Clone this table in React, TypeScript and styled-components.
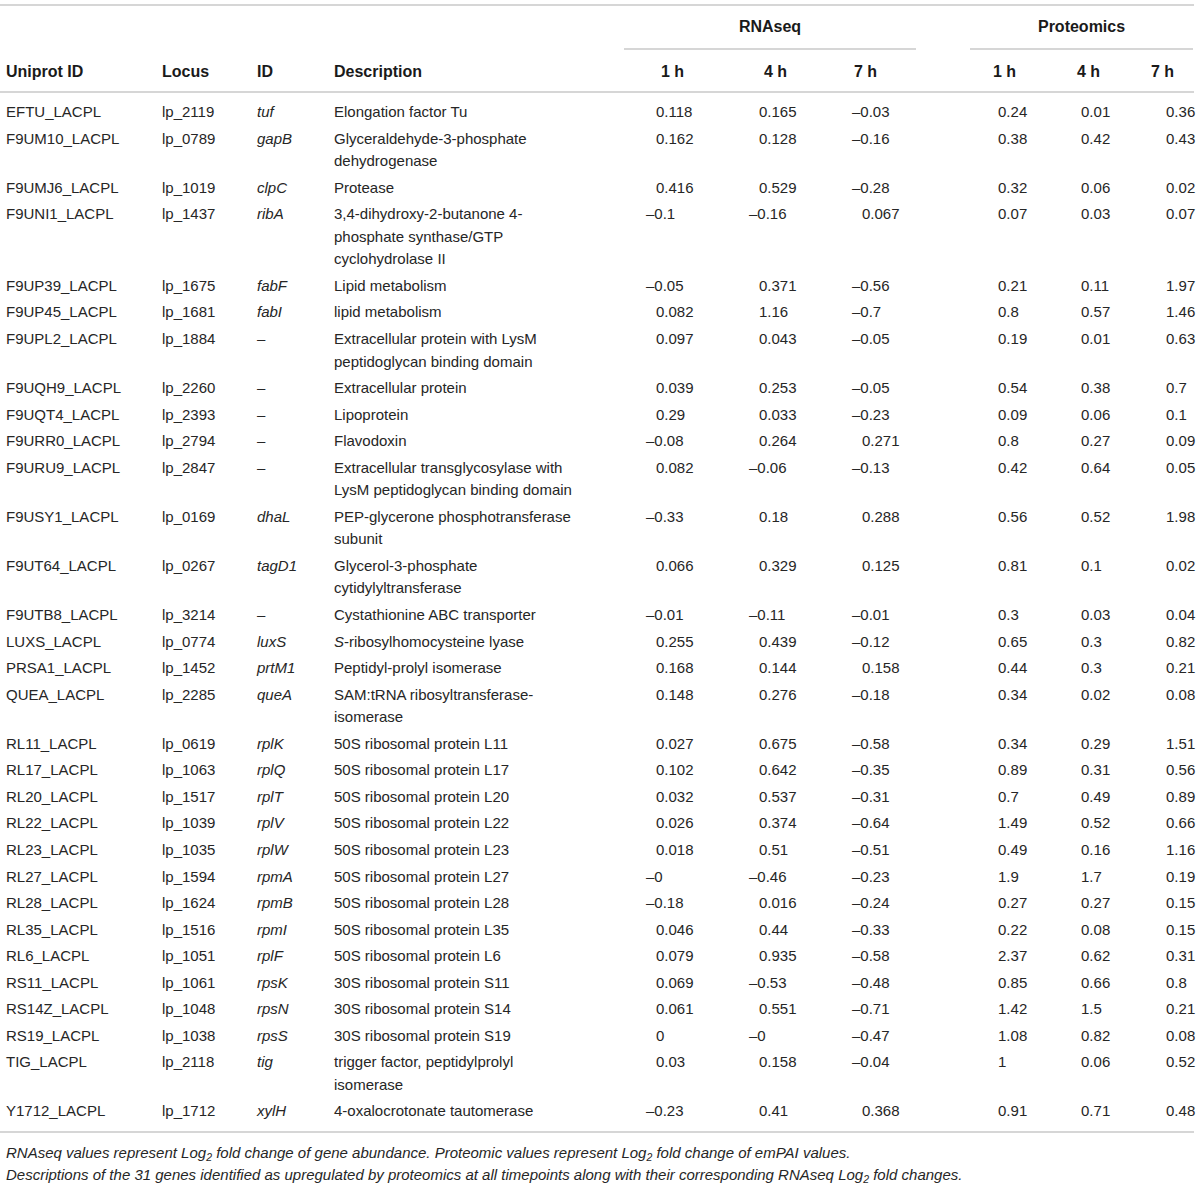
import React from "react";
import styled, { createGlobalStyle } from "styled-components";

const Global = createGlobalStyle`
  html, body { margin: 0; padding: 0; background: #ffffff; }
  body {
    font-family: "Liberation Sans", Arial, Helvetica, sans-serif;
    color: #262626;
  }
`;

const LINE = "#d6d6d6";

const Page = styled.div`
  width: 1194px;
  padding-top: 4px;
`;

const Table = styled.table`
  width: 1194px;
  table-layout: fixed;
  border-collapse: separate;
  border-spacing: 0;
  font-size: 15px;
  line-height: 22.55px;
  border-top: 2px solid ${LINE};
  border-bottom: 2px solid ${LINE};
`;

const HeadCell = styled.th`
  text-align: left;
  vertical-align: bottom;
  font-weight: bold;
  font-size: 16px;
  color: #1a1a1a;
  padding: 0 6px 8px 6px;
  border-bottom: 2px solid ${LINE};
`;

const GroupCell = styled.th`
  padding: 10px 0 0 0;
  font-weight: bold;
  font-size: 16px;
  color: #1a1a1a;
`;

const GroupLabel = styled.div<{ $left: number; $right: number }>`
  margin-left: ${(p) => p.$left}px;
  margin-right: ${(p) => p.$right}px;
  padding-bottom: 9px;
  border-bottom: 2px solid ${LINE};
  text-align: center;
`;

const SubHead = styled.th<{ $padRight?: number }>`
  text-align: center;
  font-weight: bold;
  font-size: 16px;
  color: #1a1a1a;
  padding: 11px ${(p) => p.$padRight ?? 0}px 8px 0;
  border-bottom: 2px solid ${LINE};
`;

const Row = styled.tr`
  &:first-child td { padding-top: 8px; }
  &:last-child td { padding-bottom: 8px; }
`;

const Cell = styled.td`
  vertical-align: top;
  padding: 2px 6px;
`;

const DescCell = styled.td`
  vertical-align: top;
  padding: 2px 42px 2px 6px;
`;

const NumCell = styled.td`
  vertical-align: top;
  padding: 2px 0 2px 35px;
  white-space: nowrap;
`;

const Num = styled.span<{ $neg: boolean }>`
  display: inline-block;
  margin-left: ${(p) => (p.$neg ? -10 : 0)}px;
`;

const Gene = styled.i`
  font-style: italic;
`;

const Notes = styled.div`
  padding: 9px 0 0 6px;
  font-size: 15px;
  line-height: 22px;
  font-style: italic;
  color: #262626;
`;

const NoteLine = styled.div``;

const Sub = styled.sub`
  font-size: 10.5px;
  line-height: 0;
  vertical-align: -3px;
`;

type Rec = {
  uid: string;
  locus: string;
  gene: string;
  desc: React.ReactNode;
  r: string[];
  p: string[];
};

const rows: Rec[] = [
  { uid: "EFTU_LACPL", locus: "lp_2119", gene: "tuf", desc: "Elongation factor Tu", r: ["0.118", "0.165", "–0.03"], p: ["0.24", "0.01", "0.36"] },
  { uid: "F9UM10_LACPL", locus: "lp_0789", gene: "gapB", desc: "Glyceraldehyde-3-phosphate dehydrogenase", r: ["0.162", "0.128", "–0.16"], p: ["0.38", "0.42", "0.43"] },
  { uid: "F9UMJ6_LACPL", locus: "lp_1019", gene: "clpC", desc: "Protease", r: ["0.416", "0.529", "–0.28"], p: ["0.32", "0.06", "0.02"] },
  { uid: "F9UNI1_LACPL", locus: "lp_1437", gene: "ribA", desc: "3,4-dihydroxy-2-butanone 4-phosphate synthase/GTP cyclohydrolase II", r: ["–0.1", "–0.16", "0.067"], p: ["0.07", "0.03", "0.07"] },
  { uid: "F9UP39_LACPL", locus: "lp_1675", gene: "fabF", desc: "Lipid metabolism", r: ["–0.05", "0.371", "–0.56"], p: ["0.21", "0.11", "1.97"] },
  { uid: "F9UP45_LACPL", locus: "lp_1681", gene: "fabI", desc: "lipid metabolism", r: ["0.082", "1.16", "–0.7"], p: ["0.8", "0.57", "1.46"] },
  { uid: "F9UPL2_LACPL", locus: "lp_1884", gene: "", desc: "Extracellular protein with LysM peptidoglycan binding domain", r: ["0.097", "0.043", "–0.05"], p: ["0.19", "0.01", "0.63"] },
  { uid: "F9UQH9_LACPL", locus: "lp_2260", gene: "", desc: "Extracellular protein", r: ["0.039", "0.253", "–0.05"], p: ["0.54", "0.38", "0.7"] },
  { uid: "F9UQT4_LACPL", locus: "lp_2393", gene: "", desc: "Lipoprotein", r: ["0.29", "0.033", "–0.23"], p: ["0.09", "0.06", "0.1"] },
  { uid: "F9URR0_LACPL", locus: "lp_2794", gene: "", desc: "Flavodoxin", r: ["–0.08", "0.264", "0.271"], p: ["0.8", "0.27", "0.09"] },
  { uid: "F9URU9_LACPL", locus: "lp_2847", gene: "", desc: "Extracellular transglycosylase with LysM peptidoglycan binding domain", r: ["0.082", "–0.06", "–0.13"], p: ["0.42", "0.64", "0.05"] },
  { uid: "F9USY1_LACPL", locus: "lp_0169", gene: "dhaL", desc: "PEP-glycerone phosphotransferase subunit", r: ["–0.33", "0.18", "0.288"], p: ["0.56", "0.52", "1.98"] },
  { uid: "F9UT64_LACPL", locus: "lp_0267", gene: "tagD1", desc: "Glycerol-3-phosphate cytidylyltransferase", r: ["0.066", "0.329", "0.125"], p: ["0.81", "0.1", "0.02"] },
  { uid: "F9UTB8_LACPL", locus: "lp_3214", gene: "", desc: "Cystathionine ABC transporter", r: ["–0.01", "–0.11", "–0.01"], p: ["0.3", "0.03", "0.04"] },
  { uid: "LUXS_LACPL", locus: "lp_0774", gene: "luxS", desc: (<><Gene>S</Gene>-ribosylhomocysteine lyase</>), r: ["0.255", "0.439", "–0.12"], p: ["0.65", "0.3", "0.82"] },
  { uid: "PRSA1_LACPL", locus: "lp_1452", gene: "prtM1", desc: "Peptidyl-prolyl isomerase", r: ["0.168", "0.144", "0.158"], p: ["0.44", "0.3", "0.21"] },
  { uid: "QUEA_LACPL", locus: "lp_2285", gene: "queA", desc: "SAM:tRNA ribosyltransferase-isomerase", r: ["0.148", "0.276", "–0.18"], p: ["0.34", "0.02", "0.08"] },
  { uid: "RL11_LACPL", locus: "lp_0619", gene: "rplK", desc: "50S ribosomal protein L11", r: ["0.027", "0.675", "–0.58"], p: ["0.34", "0.29", "1.51"] },
  { uid: "RL17_LACPL", locus: "lp_1063", gene: "rplQ", desc: "50S ribosomal protein L17", r: ["0.102", "0.642", "–0.35"], p: ["0.89", "0.31", "0.56"] },
  { uid: "RL20_LACPL", locus: "lp_1517", gene: "rplT", desc: "50S ribosomal protein L20", r: ["0.032", "0.537", "–0.31"], p: ["0.7", "0.49", "0.89"] },
  { uid: "RL22_LACPL", locus: "lp_1039", gene: "rplV", desc: "50S ribosomal protein L22", r: ["0.026", "0.374", "–0.64"], p: ["1.49", "0.52", "0.66"] },
  { uid: "RL23_LACPL", locus: "lp_1035", gene: "rplW", desc: "50S ribosomal protein L23", r: ["0.018", "0.51", "–0.51"], p: ["0.49", "0.16", "1.16"] },
  { uid: "RL27_LACPL", locus: "lp_1594", gene: "rpmA", desc: "50S ribosomal protein L27", r: ["–0", "–0.46", "–0.23"], p: ["1.9", "1.7", "0.19"] },
  { uid: "RL28_LACPL", locus: "lp_1624", gene: "rpmB", desc: "50S ribosomal protein L28", r: ["–0.18", "0.016", "–0.24"], p: ["0.27", "0.27", "0.15"] },
  { uid: "RL35_LACPL", locus: "lp_1516", gene: "rpmI", desc: "50S ribosomal protein L35", r: ["0.046", "0.44", "–0.33"], p: ["0.22", "0.08", "0.15"] },
  { uid: "RL6_LACPL", locus: "lp_1051", gene: "rplF", desc: "50S ribosomal protein L6", r: ["0.079", "0.935", "–0.58"], p: ["2.37", "0.62", "0.31"] },
  { uid: "RS11_LACPL", locus: "lp_1061", gene: "rpsK", desc: "30S ribosomal protein S11", r: ["0.069", "–0.53", "–0.48"], p: ["0.85", "0.66", "0.8"] },
  { uid: "RS14Z_LACPL", locus: "lp_1048", gene: "rpsN", desc: "30S ribosomal protein S14", r: ["0.061", "0.551", "–0.71"], p: ["1.42", "1.5", "0.21"] },
  { uid: "RS19_LACPL", locus: "lp_1038", gene: "rpsS", desc: "30S ribosomal protein S19", r: ["0", "–0", "–0.47"], p: ["1.08", "0.82", "0.08"] },
  { uid: "TIG_LACPL", locus: "lp_2118", gene: "tig", desc: "trigger factor, peptidylprolyl isomerase", r: ["0.03", "0.158", "–0.04"], p: ["1", "0.06", "0.52"] },
  { uid: "Y1712_LACPL", locus: "lp_1712", gene: "xylH", desc: "4-oxalocrotonate tautomerase", r: ["–0.23", "0.41", "0.368"], p: ["0.91", "0.71", "0.48"] },
];

const widths = [156, 95, 77, 293, 103, 103, 89, 47, 83, 85, 63];

function Value({ v }: { v: string }) {
  return <Num $neg={v.startsWith("–")}>{v}</Num>;
}

export default function App() {
  return (
    <Page>
      <Global />
      <Table>
        <colgroup>
          {widths.map((w, i) => (
            <col key={i} style={{ width: `${w}px` }} />
          ))}
        </colgroup>
        <thead>
          <tr>
            <HeadCell rowSpan={2}>Uniprot ID</HeadCell>
            <HeadCell rowSpan={2}>Locus</HeadCell>
            <HeadCell rowSpan={2}>ID</HeadCell>
            <HeadCell rowSpan={2}>Description</HeadCell>
            <GroupCell colSpan={3}>
              <GroupLabel $left={3} $right={0}>RNAseq</GroupLabel>
            </GroupCell>
            <HeadCell rowSpan={2} />
            <GroupCell colSpan={3}>
              <GroupLabel $left={7} $right={1}>Proteomics</GroupLabel>
            </GroupCell>
          </tr>
          <tr>
            <SubHead>1 h</SubHead>
            <SubHead>4 h</SubHead>
            <SubHead $padRight={12}>7 h</SubHead>
            <SubHead>1 h</SubHead>
            <SubHead>4 h</SubHead>
            <SubHead>7 h</SubHead>
          </tr>
        </thead>
        <tbody>
          {rows.map((r) => (
            <Row key={r.uid}>
              <Cell>{r.uid}</Cell>
              <Cell>{r.locus}</Cell>
              <Cell>{r.gene ? <Gene>{r.gene}</Gene> : "–"}</Cell>
              <DescCell>{r.desc}</DescCell>
              {r.r.map((v, i) => (
                <NumCell key={`r${i}`}>
                  <Value v={v} />
                </NumCell>
              ))}
              <Cell />
              {r.p.map((v, i) => (
                <NumCell key={`p${i}`}>
                  <Value v={v} />
                </NumCell>
              ))}
            </Row>
          ))}
        </tbody>
      </Table>
      <Notes>
        <NoteLine>
          RNAseq values represent Log<Sub>2</Sub> fold change of gene abundance. Proteomic values represent Log<Sub>2</Sub> fold change of emPAI values.
        </NoteLine>
        <NoteLine>
          Descriptions of the 31 genes identified as upregulated by proteomics at all timepoints along with their corresponding RNAseq Log<Sub>2</Sub> fold changes.
        </NoteLine>
      </Notes>
    </Page>
  );
}
